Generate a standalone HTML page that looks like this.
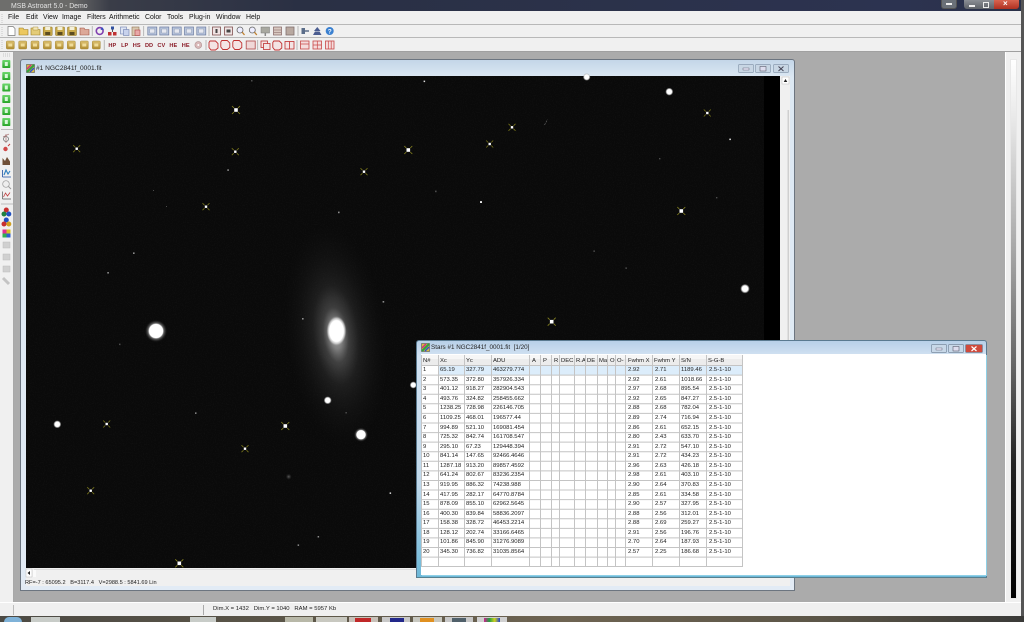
<!DOCTYPE html>
<html><head><meta charset="utf-8"><title>MSB Astroart 5.0 - Demo</title>
<style>
html,body{margin:0;padding:0;background:#ababab;width:1024px;height:622px;overflow:hidden}
body{position:relative;font-family:"Liberation Sans",sans-serif;color:#333;filter:blur(.3px)}
svg{position:absolute;left:0;top:0}
.a{position:absolute}
#menu span{position:absolute;top:14px;font-size:6.9px;line-height:8px;color:#111;white-space:nowrap}
.r{position:absolute;left:0;height:9.58px;width:340px;font-size:5.9px;line-height:9.58px;color:#222;margin-top:.6px}
.r b{position:absolute;font-weight:normal;white-space:nowrap}
.r b:nth-child(1){left:423px}.r b:nth-child(2){left:440px}.r b:nth-child(3){left:466px}.r b:nth-child(4){left:493px}
.r b:nth-child(5){left:628px}.r b:nth-child(6){left:655px}.r b:nth-child(7){left:681px}.r b:nth-child(8){left:709px}
.h{position:absolute;top:357px;font-size:5.9px;line-height:9px;color:#222;white-space:nowrap}
</style></head><body>

<!-- application chrome base -->
<div class="a" style="left:0;top:0;width:1024px;height:11px;background:linear-gradient(90deg,#6e6e6c 0,#6a6a68 70px,#3a3d48 110px,#2a3044 300px,#2c3350 900px,#2a3148 1024px)"></div>
<div class="a" style="left:11px;top:1.500px;font-size:6.9px;line-height:9px;color:#e2e2e2;white-space:nowrap">MSB Astroart 5.0 - Demo</div>
<div class="a" style="left:0;top:11px;width:1021px;height:41px;background:#f0f0f0"></div>
<div class="a" style="left:0;top:24px;width:1021px;height:1px;background:#b8b8b8"></div>
<div class="a" style="left:0;top:37px;width:1021px;height:1px;background:#b8b8b8"></div>
<div class="a" style="left:0;top:51px;width:1021px;height:1px;background:#a0a0a0"></div>
<div class="a" style="left:0;top:52px;width:14px;height:551px;background:#f0f0f0;border-right:1px solid #a8a8a8;box-sizing:border-box"></div>
<div class="a" style="left:1005px;top:52px;width:16px;height:551px;background:#f0f0f0;border-left:1px solid #fff;box-sizing:border-box"></div>
<div class="a" style="left:1011px;top:60px;width:5px;height:538px;background:linear-gradient(180deg,#fff 0,#e6e6e6 12%,#a8a8a8 35%,#6a6a6a 55%,#222 75%,#000 100%);box-shadow:0 0 0 1px #e8e8e8"></div>
<div class="a" style="left:1021px;top:0;width:3px;height:622px;background:#555"></div>
<div class="a" style="left:0;top:602px;width:1021px;height:14px;background:#f0f0f0;border-top:1px solid #fff;box-sizing:border-box"></div>
<div class="a" style="left:13px;top:605px;width:1px;height:10px;background:#bbb"></div>
<div class="a" style="left:203px;top:605px;width:1px;height:10px;background:#aaa"></div>
<div class="a" style="left:213px;top:605px;font-size:5.9px;line-height:8px;color:#222;white-space:pre">Dim.X = 1432   Dim.Y = 1040   RAM = 5957 Kb</div>

<!-- taskbar -->
<div class="a" style="left:0;top:616px;width:1024px;height:6px;background:linear-gradient(90deg,#4c4a44,#5c5648 30%,#6e6452 55%,#5c5648 80%,#3a3a38)"></div>
<div class="a" style="left:4px;top:617px;width:18px;height:5px;border-radius:9px 9px 0 0;background:#7fb2d8"></div>
<div class="a" style="left:31px;top:617px;width:29px;height:5px;background:#c8ccc8"></div>
<div class="a" style="left:190px;top:617px;width:26px;height:5px;background:#c8ccc8"></div>
<div class="a" style="left:285px;top:617px;width:28px;height:5px;background:#b8b8a8"></div>
<div class="a" style="left:316px;top:617px;width:31px;height:5px;background:#c8c8c0"></div>
<div class="a" style="left:349px;top:617px;width:29px;height:5px;background:#c8c0b8"></div>
<div class="a" style="left:355px;top:618px;width:16px;height:4px;background:#c02828"></div>
<div class="a" style="left:382px;top:617px;width:28px;height:5px;background:#c8c8c8"></div>
<div class="a" style="left:390px;top:618px;width:14px;height:4px;background:#22288a"></div>
<div class="a" style="left:413px;top:617px;width:29px;height:5px;background:#c8c8c0"></div>
<div class="a" style="left:420px;top:618px;width:14px;height:4px;background:#e09020"></div>
<div class="a" style="left:445px;top:617px;width:28px;height:5px;background:#c8c8c8"></div>
<div class="a" style="left:452px;top:618px;width:14px;height:4px;background:#50606a"></div>
<div class="a" style="left:477px;top:617px;width:30px;height:5px;background:#d0d0d0"></div>
<div class="a" style="left:484px;top:618px;width:16px;height:4px;background:linear-gradient(90deg,#d02090,#20a040,#d0d020,#2040d0)"></div>

<!-- menu -->
<div id="menu">
<span style="left:8px">File</span><span style="left:26px">Edit</span><span style="left:43px">View</span><span style="left:62px">Image</span><span style="left:87px">Filters</span><span style="left:109px">Arithmetic</span><span style="left:145px">Color</span><span style="left:167px">Tools</span><span style="left:189px">Plug-in</span><span style="left:216px">Window</span><span style="left:246px">Help</span>
</div>

<!-- window 1 frame -->
<div class="a" style="left:20px;top:59px;width:775px;height:532px;box-sizing:border-box;border:1px solid #6c7580;border-radius:3px 3px 0 0;background:linear-gradient(180deg,#c4d6e8 0,#dce8f3 17px,#e2ebf5 100%)"></div>
<div class="a" style="left:36px;top:64.500px;font-size:6.6px;line-height:8px;color:#222;white-space:nowrap">#1 NGC2841f_0001.fit</div>
<div class="a" style="left:26px;top:568px;width:764px;height:18px;background:#f0f0f0"></div>
<div class="a" style="left:25px;top:579px;font-size:5.6px;line-height:8px;color:#222;white-space:pre">RF=-7 : 65095.2   B=3117.4   V=2988.5 : 5841.69 Lin</div>
<div class="a" style="left:780px;top:76px;width:10px;height:492px;background:#f0f0f0"></div>

<!-- main svg: image, icons -->
<svg width="1024" height="622" viewBox="0 0 1024 622" xmlns="http://www.w3.org/2000/svg">
<defs>
<radialGradient id="g"><stop offset="0" stop-color="#fff"/><stop offset=".6" stop-color="#fff"/><stop offset=".8" stop-color="#bbb" stop-opacity=".7"/><stop offset="1" stop-color="#888" stop-opacity="0"/></radialGradient>
<radialGradient id="gb"><stop offset="0" stop-color="#fff"/><stop offset=".62" stop-color="#fff"/><stop offset=".72" stop-color="#999" stop-opacity=".6"/><stop offset="1" stop-color="#444" stop-opacity="0"/></radialGradient>
<radialGradient id="d"><stop offset="0" stop-color="#aaa"/><stop offset="1" stop-color="#555" stop-opacity="0"/></radialGradient>
<radialGradient id="halo"><stop offset="0" stop-color="#fff"/><stop offset=".12" stop-color="#c8c8c8" stop-opacity=".9"/><stop offset=".25" stop-color="#777" stop-opacity=".6"/><stop offset=".45" stop-color="#444" stop-opacity=".4"/><stop offset=".7" stop-color="#2a2a2a" stop-opacity=".25"/><stop offset="1" stop-color="#1a1a1a" stop-opacity="0"/></radialGradient>
<radialGradient id="core"><stop offset="0" stop-color="#fff"/><stop offset=".7" stop-color="#fff"/><stop offset=".85" stop-color="#ddd" stop-opacity=".7"/><stop offset="1" stop-color="#999" stop-opacity="0"/></radialGradient>
<filter id="n" x="0" y="0" width="100%" height="100%"><feTurbulence type="fractalNoise" baseFrequency=".9" numOctaves="2" seed="4"/><feColorMatrix values="0 0 0 0 .35 0 0 0 0 .35 0 0 0 0 .35 .9 0 0 0 -.42"/></filter>
<g id="x"><path d="M-3.5-3.5-1.5-1.5M3.5-3.5 1.5-1.5M-3.5 3.5-1.5 1.5M3.5 3.5 1.5 1.5" stroke="#77741a" stroke-width=".8" fill="none"/><rect x="-1.2" y="-1.2" width="2.4" height="2.4" fill="#fff"/></g>
<g id="X"><path d="M-4-4-2-2M4-4 2-2M-4 4-2 2M4 4 2 2" stroke="#8a8620" stroke-width=".8" fill="none"/><rect x="-1.8" y="-1.8" width="3.6" height="3.6" fill="#fff"/></g>
<linearGradient id="gold" x1="0" y1="0" x2="0" y2="1"><stop offset="0" stop-color="#dcc070"/><stop offset="1" stop-color="#b08c30"/></linearGradient>
<linearGradient id="grn" x1="0" y1="0" x2="0" y2="1"><stop offset="0" stop-color="#6cd86c"/><stop offset="1" stop-color="#28a428"/></linearGradient>
<g id="gs"><rect x="-4" y="-4" width="8" height="8" rx="1" fill="url(#gold)" stroke="#a88a38" stroke-width=".5"/><rect x="-2" y="-1.5" width="4" height="3" fill="#f0dc98"/></g>
<g id="gr"><rect x="-4" y="-4" width="8" height="8" rx=".8" fill="url(#grn)"/><rect x="-1.5" y="-2" width="3" height="4" fill="#d8f8d8"/></g>
<g id="bf"><rect x="-4.5" y="-4" width="9" height="8" fill="#b8c4dc" stroke="#6c7ca0" stroke-width=".7"/><rect x="-2.5" y="-2" width="5" height="4" fill="#e6e8f0" stroke="#8090a8" stroke-width=".4"/></g>
<g id="rf"><rect x="-4.5" y="-4" width="9" height="8" fill="#f0d8d8" stroke="#b04848" stroke-width=".8"/></g>
<g id="rd"><path d="M-3.5-4.5H2L4.5-2V2.5L2 4.5H-2.5L-4.5 2V-3Z" fill="#f4e4e4" stroke="#c03030" stroke-width=".9"/></g>
<g id="fl"><rect x="-4.5" y="-4" width="9" height="8.5" rx=".6" fill="#c8a848" stroke="#8a7020" stroke-width=".5"/><rect x="-2.5" y="-4" width="5" height="3" fill="#f4f0d8"/><rect x="-2.5" y="1" width="5" height="3" fill="#5c4c20"/></g>
</defs>

<!-- image -->
<rect x="26" y="76" width="754" height="492" fill="#000"/>
<rect x="26" y="76" width="738" height="492" fill="#0a0a0a"/>
<rect x="26" y="76" width="738" height="492" filter="url(#n)" opacity=".14"/>
<g transform="rotate(-7 336 335)">
<ellipse cx="336" cy="335" rx="50" ry="112" fill="url(#halo)" opacity=".85"/>
<ellipse cx="336" cy="331" rx="20" ry="34" fill="url(#halo)" opacity=".8"/>
</g>
<ellipse cx="336.5" cy="331" rx="10" ry="15" fill="url(#core)"/>
<!-- bright -->
<circle cx="156" cy="331" r="11" fill="url(#gb)"/>
<circle cx="361" cy="434.7" r="7" fill="url(#gb)"/>
<circle cx="745" cy="288.7" r="4.8" fill="url(#g)"/>
<circle cx="669.3" cy="91.7" r="4" fill="url(#g)"/>
<circle cx="586.7" cy="77" r="3.8" fill="url(#g)"/>
<circle cx="57.3" cy="424.3" r="4" fill="url(#g)"/>
<circle cx="327.7" cy="400.3" r="4" fill="url(#g)"/>
<circle cx="413.3" cy="385" r="3.6" fill="url(#g)"/>
<!-- crosses -->
<use href="#x" x="76.7" y="148.7"/><use href="#X" x="236" y="110"/><use href="#x" x="235.3" y="151.7"/><use href="#x" x="206" y="206.7"/>
<use href="#x" x="364" y="171.7"/><use href="#X" x="408.3" y="150"/><use href="#x" x="707.3" y="113"/><use href="#x" x="512" y="127.3"/>
<use href="#x" x="489.7" y="144"/><use href="#X" x="681.3" y="211"/><use href="#X" x="551.7" y="321.7"/><use href="#x" x="106.7" y="424"/>
<use href="#X" x="285.3" y="426"/><use href="#x" x="245" y="448.7"/><use href="#x" x="90.7" y="490.7"/><use href="#X" x="179.3" y="563.3"/>
<!-- small -->
<g fill="#ddd">
<rect x="423.6" y="80.6" width="1.5" height="1.5"/><rect x="729.3" y="138.6" width="1.6" height="1.5"/><rect x="480" y="201.2" width="2" height="1.7" fill="#fff"/><rect x="389.6" y="492.4" width="1.5" height="1.5"/>
</g>
<g fill="#8c8c8c">
<rect x="338" y="211.6" width="1.6" height="1.6"/><rect x="227.3" y="169.3" width="1.6" height="1.6"/><rect x="133" y="252.4" width="1.6" height="1.6"/><rect x="107.3" y="272" width="1.6" height="1.6"/><rect x="382.6" y="301" width="1.6" height="1.6"/><rect x="302" y="318" width="1.6" height="1.6"/><rect x="195" y="412.4" width="1.5" height="1.5"/><rect x="297.6" y="544.4" width="1.5" height="1.5"/><rect x="317.6" y="536" width="1.5" height="1.5"/>
</g>
<g fill="#4c4c4c">
<rect x="251" y="80" width="1.5" height="1.5"/><rect x="435" y="190.6" width="1.6" height="1.6"/><rect x="625.4" y="267.4" width="1.5" height="1.5"/><rect x="593.4" y="250.4" width="1.5" height="1.5"/><rect x="119" y="343.6" width="1.5" height="1.5"/><rect x="345.4" y="412" width="1.5" height="1.5"/><rect x="166" y="206" width="1" height="1"/><rect x="153" y="190" width="1" height="1"/><rect x="659" y="158" width="1.4" height="1.4"/><rect x="716" y="197" width="1.4" height="1.4"/>
</g>
<circle cx="288.7" cy="476.7" r="3" fill="url(#d)" opacity=".5"/>
<path d="M544.5 125 547.5 119.5" stroke="#666" stroke-width=".7" stroke-dasharray="2 1"/>

<!-- v scrollbar -->
<rect x="782" y="77" width="7" height="7" fill="#fff" stroke="#bbb" stroke-width=".5"/><path d="M785.5 79 783.7 82H787.3Z" fill="#222"/>
<rect x="787.5" y="110" width="1.5" height="458" fill="#cfcfcf"/>
<!-- h scrollbar -->
<rect x="26" y="569" width="6" height="8" fill="#fff" stroke="#bbb" stroke-width=".5"/><path d="M27.5 573 30 571V575Z" fill="#222"/>
<rect x="34" y="569" width="720" height="1" fill="#ddd"/><rect x="33" y="570" width="3" height="7" fill="#fafafa"/>

<!-- window 1 caption -->
<g><rect x="26.5" y="64.5" width="8" height="8" fill="#d8b840" stroke="#555" stroke-width=".6"/><path d="M27 72 34 65" stroke="#30a040" stroke-width="2"/><path d="M27 69 31 65" stroke="#d03080" stroke-width="1.5"/><path d="M30 72 34 68" stroke="#3050d0" stroke-width="1.5"/></g>
<g fill="#c8d6e4" stroke="#8a9cb0" stroke-width=".7">
<rect x="738.5" y="64.5" width="15" height="8" rx="1"/><rect x="755.5" y="64.5" width="15" height="8" rx="1"/><rect x="773.5" y="64.5" width="15" height="8" rx="1"/></g>
<rect x="743" y="68" width="6" height="2" fill="#eef" stroke="#445" stroke-width=".4"/>
<rect x="760" y="66.5" width="6" height="4.5" fill="#dde" stroke="#445" stroke-width=".5"/>
<path d="M778.5 66.5 783.5 71M783.5 66.5 778.5 71" stroke="#445" stroke-width="1"/>

<!-- toolbar grips -->
<g stroke="#c8c8c8" stroke-dasharray="1 1"><path d="M2 14V23M2 27V36M2 40V50M3 54H11M3 56H11"/></g>

<!-- row 1 -->
<path d="M8 26.5H13L15 28.5V35.5H8Z" fill="#fff" stroke="#777" stroke-width=".7"/>
<path d="M19 28H23L24 29.5H28V35H19Z" fill="#ecc860" stroke="#9a7c24" stroke-width=".6"/>
<path d="M31 28H35L36 29.5H40V35H31Z" fill="#e4cc78" stroke="#9a7c24" stroke-width=".6"/><path d="M33 27H38V30H33Z" fill="#f4e8b8" stroke="#9a7c24" stroke-width=".4"/>
<use href="#fl" x="47.7" y="31"/><use href="#fl" x="60" y="31"/><use href="#fl" x="72" y="31"/>
<path d="M80 28H84L85 29.5H89V35H80Z" fill="#dca898" stroke="#a05040" stroke-width=".6"/>
<path d="M92.3 26V36M143.6 26V36M209 26V36M298 26V36" stroke="#b8b8b8"/>
<circle cx="99.7" cy="31" r="3.4" fill="none" stroke="#8040b0" stroke-width="1.6"/><path d="M102 27 104 29.500 100.500 30Z" fill="#3050c0"/>
<rect x="111" y="26.500" width="3" height="3" fill="#3050a0"/><rect x="108" y="32" width="3.500" height="3.500" fill="#c03030"/><rect x="113" y="32" width="3.500" height="3.500" fill="#c03030"/><path d="M112.500 29.500V32" stroke="#555"/>
<rect x="120.500" y="27" width="6" height="7" fill="#dde4f4" stroke="#7080b0" stroke-width=".6"/><rect x="123.500" y="29.500" width="5.500" height="6" fill="#c8d2ec" stroke="#7080b0" stroke-width=".6"/>
<rect x="132" y="27" width="7" height="8.500" fill="#d8c8b0" stroke="#907050" stroke-width=".6"/><rect x="135" y="30" width="5" height="5.500" fill="#e8a8a8" stroke="#b04848" stroke-width=".6"/>
<use href="#bf" x="152.300" y="31"/><use href="#bf" x="164.300" y="31"/><use href="#bf" x="176.700" y="31"/><use href="#bf" x="189" y="31"/><use href="#bf" x="201.300" y="31"/>
<rect x="212.500" y="27" width="8" height="8" fill="#f0e4e4" stroke="#805050" stroke-width=".8"/><rect x="215.500" y="29" width="2" height="4" fill="#444"/>
<rect x="224.500" y="27" width="8" height="8" fill="#f0e4e4" stroke="#805050" stroke-width=".8"/><rect x="226.500" y="29.500" width="4" height="3" fill="#444"/>
<circle cx="240" cy="30" r="3" fill="#eef" stroke="#666" stroke-width=".8"/><path d="M242.200 32.200 244.500 35" stroke="#c08030" stroke-width="1.300"/>
<circle cx="252.300" cy="30" r="3" fill="#eef" stroke="#666" stroke-width=".8"/><path d="M254.500 32.200 256.800 35" stroke="#c08030" stroke-width="1.300"/>
<rect x="261" y="27" width="8.500" height="6" fill="#a8a8a0" stroke="#777" stroke-width=".5"/><path d="M265.300 33V36" stroke="#888" stroke-width="1.500"/>
<rect x="273.500" y="27" width="8" height="8" fill="#d8c8c0" stroke="#806060" stroke-width=".7"/><path d="M274 30H281M274 32.500H281" stroke="#806060" stroke-width=".5"/>
<rect x="286" y="27" width="8" height="8" fill="#b8a8a0" stroke="#807070" stroke-width=".8"/>
<rect x="301.500" y="28" width="3.500" height="6" fill="#5a6c88"/><path d="M305 31H309" stroke="#5a6c88" stroke-width="1.500"/>
<path d="M317.300 27 320.500 31H314ZM313 35 315 31.500H319.500L321.500 35Z" fill="#4a5c90"/>
<circle cx="329.700" cy="31" r="4" fill="#3a80d0"/><text x="329.700" y="33.500" font-size="6.500" font-family="Liberation Sans" font-weight="bold" text-anchor="middle" fill="#fff">?</text>

<!-- row 2 -->
<use href="#gs" x="10.300" y="45"/><use href="#gs" x="22.700" y="45"/><use href="#gs" x="35" y="45"/><use href="#gs" x="47.300" y="45"/><use href="#gs" x="59.300" y="45"/><use href="#gs" x="71.300" y="45"/><use href="#gs" x="84.300" y="45"/><use href="#gs" x="96.300" y="45"/>
<path d="M104.300 40V50M206 40V50M257.600 40V50M297 40V50" stroke="#b8b8b8"/>
<g font-family="Liberation Sans" font-size="5.600" font-weight="bold" fill="#8a1c28" text-anchor="middle">
<text x="112.300" y="47">HP</text><text x="124.700" y="47">LP</text><text x="136.700" y="47">HS</text><text x="149" y="47">DD</text><text x="161.300" y="47">CV</text><text x="173.300" y="47">HE</text><text x="185.700" y="47">HE</text>
</g>
<circle cx="198.300" cy="45" r="3.400" fill="#d8b8b8" stroke="#b09090" stroke-width=".6"/><circle cx="198.300" cy="45" r="1" fill="#fff"/>
<use href="#rd" x="213.500" y="45.500"/><use href="#rd" x="225.300" y="45"/><use href="#rd" x="237.300" y="45"/><use href="#rf" x="250.700" y="45"/>
<rect x="261" y="41" width="6.500" height="6.500" fill="#f4e4e4" stroke="#c03030" stroke-width=".8"/><rect x="263.500" y="43.500" width="6.500" height="6" fill="#f4e4e4" stroke="#c03030" stroke-width=".8"/>
<use href="#rd" x="277.300" y="45.500"/><rect x="285" y="41.500" width="9" height="7.500" fill="#f4e4e4" stroke="#c03030" stroke-width=".8"/><path d="M289.500 41.500V49" stroke="#c03030" stroke-width=".8"/>
<g fill="#f4dcdc" stroke="#c84848" stroke-width=".8"><rect x="300.500" y="41" width="8.500" height="8"/><rect x="313" y="41" width="8.500" height="8"/><rect x="325.500" y="41" width="8.500" height="8"/></g>
<path d="M300.500 44H309M313 45H321.500M317.300 41V49M328.300 41V49M331.200 41V49" stroke="#c84848" stroke-width=".7"/>

<!-- left bar -->
<use href="#gr" x="6.300" y="64"/><use href="#gr" x="6.300" y="76"/><use href="#gr" x="6.300" y="87.500"/><use href="#gr" x="6.300" y="99"/><use href="#gr" x="6.300" y="111"/><use href="#gr" x="6.300" y="122"/>
<path d="M1 129.500H13M1 204H13" stroke="#bcbcbc"/>
<circle cx="6" cy="139" r="2.500" fill="none" stroke="#777" stroke-width=".8"/><path d="M6 134V143M3 137 9 134" stroke="#a06060" stroke-width=".6"/>
<circle cx="5.500" cy="149" r="2.200" fill="#d04848"/><path d="M8 146 10 144" stroke="#c04040"/>
<path d="M2.500 165V158L5 161 7 157 10 161.500V165Z" fill="#705038"/>
<path d="M2.500 177V170M2.500 177H11" stroke="#2050a0" stroke-width=".8"/><path d="M4 175 6 170 8 174 10 171" stroke="#3080c0" fill="none" stroke-width="1.100"/>
<circle cx="6" cy="184" r="3.300" fill="#eee" stroke="#999" stroke-width=".7"/><path d="M8.500 186.500 11 189" stroke="#999"/>
<path d="M2.500 199V191.500M2.500 199H11" stroke="#555" stroke-width=".7"/><path d="M3.500 197 5.500 193 7.500 196 10 192.500" stroke="#c04040" fill="none" stroke-width=".8"/>
<circle cx="6.300" cy="210" r="2.500" fill="#c83030"/><circle cx="4" cy="214" r="2.500" fill="#208040"/><circle cx="8.800" cy="214" r="2.500" fill="#2050c0"/>
<circle cx="6.300" cy="220" r="2.500" fill="#2050c0"/><circle cx="4" cy="224" r="2.500" fill="#c83030"/><circle cx="8.800" cy="224" r="2.500" fill="#d0a020"/>
<rect x="2.500" y="229.500" width="4" height="4" fill="#e03090"/><rect x="6.500" y="229.500" width="4" height="4" fill="#d8c020"/><rect x="2.500" y="233.500" width="4" height="4" fill="#30b050"/><rect x="6.500" y="233.500" width="4" height="4" fill="#3060d0"/>
<g fill="#d0d0d0" stroke="#bcbcbc" stroke-width=".5"><rect x="3" y="242" width="7" height="6"/><rect x="3" y="254" width="7" height="6"/><rect x="3" y="266" width="7" height="6"/></g>
<path d="M3 278 9 284" stroke="#c4c4c4" stroke-width="3"/>
</svg>

<!-- stars window -->
<div class="a" style="left:416px;top:340px;width:571px;height:238px;box-sizing:border-box;border:1px solid #5a7a90;border-bottom-color:#56808f;border-radius:3px 3px 0 0;background:linear-gradient(180deg,#b8d0e8 0,#d2e2f2 15px,#c0d8ea 60%,#6db8d8 100%)"></div>
<div class="a" style="left:421px;top:354px;width:565px;height:221px;background:#fff;box-shadow:1px 1px 0 #8fd0e6"></div>
<div class="a" style="left:431px;top:344px;font-size:6.300px;line-height:8px;color:#222;white-space:pre">Stars #1 NGC2841f_0001.fit  [1/20]</div>

<svg width="1024" height="622" viewBox="0 0 1024 622" xmlns="http://www.w3.org/2000/svg" style="pointer-events:none">
<rect x="421.500" y="343.500" width="8" height="8" fill="#d8b840" stroke="#555" stroke-width=".6"/><path d="M422 351 429 344" stroke="#30a040" stroke-width="2"/><path d="M422 348 426 344" stroke="#d03080" stroke-width="1.500"/><path d="M425 351 429 347" stroke="#3050d0" stroke-width="1.500"/>
<g stroke="#7a8ca0" stroke-width=".7"><rect x="931.500" y="344.500" width="15" height="8" rx="1" fill="#c8d8e8"/><rect x="948.500" y="344.500" width="15" height="8" rx="1" fill="#c8d8e8"/><rect x="965.500" y="344.500" width="17" height="8" rx="1" fill="#d04a3c"/></g>
<rect x="936" y="348" width="6" height="2" fill="#eef" stroke="#445" stroke-width=".4"/>
<rect x="953" y="346.500" width="6" height="4.500" fill="#dde" stroke="#445" stroke-width=".5"/>
<path d="M971.500 346.500 976.500 351M976.500 346.500 971.500 351" stroke="#fff" stroke-width="1.200"/>
<!-- header -->
<rect x="421" y="355" width="321" height="10.500" fill="#ececec"/>
<rect x="421" y="355" width="321" height="4" fill="#f6f6f6"/>
<!-- highlight -->
<rect x="438" y="366" width="304" height="9" fill="#dcedfb"/>
<!-- grid -->
<g stroke="#c4c4c4" stroke-width="1" fill="none">
<path d="M421 365.500H742M421 375.100H742M421 384.700H742M421 394.200H742M421 403.800H742M421 413.400H742M421 423H742M421 432.600H742M421 442.100H742M421 451.700H742M421 461.300H742M421 470.900H742M421 480.500H742M421 490H742M421 499.600H742M421 509.200H742M421 518.800H742M421 528.400H742M421 537.900H742M421 547.500H742M421 557.100H742M421 566.500H742"/>
<path d="M421.500 355V567M438.500 355V567M464.500 355V567M491.500 355V567M529.500 355V567M540.500 355V567M551.500 355V567M559.500 355V567M574.500 355V567M585.500 355V567M597.500 355V567M607.500 355V567M615.500 355V567M625.500 355V567M652.500 355V567M679.500 355V567M706.500 355V567M742.500 355V567"/>
</g>
</svg>

<span class="h" style="left:423px">N#</span><span class="h" style="left:440px">Xc</span><span class="h" style="left:466px">Yc</span><span class="h" style="left:493px">ADU</span><span class="h" style="left:532px">A</span><span class="h" style="left:543px">P</span><span class="h" style="left:554px">R</span><span class="h" style="left:561px">DEC</span><span class="h" style="left:576px;width:9px;overflow:hidden">R.A</span><span class="h" style="left:587px;width:10px;overflow:hidden">DE</span><span class="h" style="left:599px;width:8px;overflow:hidden">Ma</span><span class="h" style="left:610px">O</span><span class="h" style="left:617px;width:8px;overflow:hidden">O-</span><span class="h" style="left:628px">Fwhm X</span><span class="h" style="left:654px">Fwhm Y</span><span class="h" style="left:681px">S/N</span><span class="h" style="left:708px">S-G-B</span>

<div class="r" style="top:365.500px"><b>1</b><b>65.19</b><b>327.79</b><b>463279.774</b><b>2.92</b><b>2.71</b><b>1189.46</b><b>2.5-1-10</b></div>
<div class="r" style="top:375.100px"><b>2</b><b>573.35</b><b>372.80</b><b>357926.334</b><b>2.92</b><b>2.61</b><b>1018.66</b><b>2.5-1-10</b></div>
<div class="r" style="top:384.700px"><b>3</b><b>401.12</b><b>918.27</b><b>282904.543</b><b>2.97</b><b>2.68</b><b>895.54</b><b>2.5-1-10</b></div>
<div class="r" style="top:394.200px"><b>4</b><b>493.76</b><b>324.82</b><b>258455.662</b><b>2.92</b><b>2.65</b><b>847.27</b><b>2.5-1-10</b></div>
<div class="r" style="top:403.800px"><b>5</b><b>1238.25</b><b>728.98</b><b>226146.705</b><b>2.88</b><b>2.68</b><b>782.04</b><b>2.5-1-10</b></div>
<div class="r" style="top:413.400px"><b>6</b><b>1109.25</b><b>468.01</b><b>196577.44</b><b>2.89</b><b>2.74</b><b>716.94</b><b>2.5-1-10</b></div>
<div class="r" style="top:423px"><b>7</b><b>994.89</b><b>521.10</b><b>169081.454</b><b>2.86</b><b>2.61</b><b>652.15</b><b>2.5-1-10</b></div>
<div class="r" style="top:432.600px"><b>8</b><b>725.32</b><b>842.74</b><b>161708.547</b><b>2.80</b><b>2.43</b><b>633.70</b><b>2.5-1-10</b></div>
<div class="r" style="top:442.100px"><b>9</b><b>295.10</b><b>67.23</b><b>129448.394</b><b>2.91</b><b>2.72</b><b>547.10</b><b>2.5-1-10</b></div>
<div class="r" style="top:451.700px"><b>10</b><b>841.14</b><b>147.65</b><b>92466.4646</b><b>2.91</b><b>2.72</b><b>434.23</b><b>2.5-1-10</b></div>
<div class="r" style="top:461.300px"><b>11</b><b>1287.18</b><b>913.20</b><b>89857.4592</b><b>2.96</b><b>2.63</b><b>426.18</b><b>2.5-1-10</b></div>
<div class="r" style="top:470.900px"><b>12</b><b>641.24</b><b>802.67</b><b>83236.2354</b><b>2.98</b><b>2.61</b><b>403.10</b><b>2.5-1-10</b></div>
<div class="r" style="top:480.500px"><b>13</b><b>919.95</b><b>886.32</b><b>74238.988</b><b>2.90</b><b>2.64</b><b>370.83</b><b>2.5-1-10</b></div>
<div class="r" style="top:490px"><b>14</b><b>417.95</b><b>282.17</b><b>64770.8784</b><b>2.85</b><b>2.61</b><b>334.58</b><b>2.5-1-10</b></div>
<div class="r" style="top:499.600px"><b>15</b><b>878.09</b><b>855.10</b><b>62962.5645</b><b>2.90</b><b>2.57</b><b>327.95</b><b>2.5-1-10</b></div>
<div class="r" style="top:509.200px"><b>16</b><b>400.30</b><b>839.84</b><b>58836.2097</b><b>2.88</b><b>2.56</b><b>312.01</b><b>2.5-1-10</b></div>
<div class="r" style="top:518.800px"><b>17</b><b>158.38</b><b>328.72</b><b>46453.2214</b><b>2.88</b><b>2.69</b><b>259.27</b><b>2.5-1-10</b></div>
<div class="r" style="top:528.400px"><b>18</b><b>128.12</b><b>202.74</b><b>33166.6465</b><b>2.91</b><b>2.56</b><b>196.76</b><b>2.5-1-10</b></div>
<div class="r" style="top:537.900px"><b>19</b><b>101.86</b><b>845.90</b><b>31276.9089</b><b>2.70</b><b>2.64</b><b>187.93</b><b>2.5-1-10</b></div>
<div class="r" style="top:547.500px"><b>20</b><b>345.30</b><b>736.82</b><b>31035.8564</b><b>2.57</b><b>2.25</b><b>186.68</b><b>2.5-1-10</b></div>

<!-- title bar controls -->
<div class="a" style="left:941px;top:0;width:16px;height:9px;background:#6a7078;border-radius:0 0 3px 3px;border:1px solid #555;border-top:0;box-sizing:border-box"></div>
<div class="a" style="left:946px;top:3px;width:6px;height:2px;background:#eee"></div>
<div class="a" style="left:964px;top:0;width:30px;height:9px;background:linear-gradient(180deg,#8a8e94,#5e6268);border-radius:0 0 0 3px"></div>
<div class="a" style="left:994px;top:0;width:25px;height:9px;background:linear-gradient(180deg,#d86450,#b03020);border-radius:0 0 3px 0"></div>
<div class="a" style="left:969px;top:5px;width:6px;height:2px;background:#eee"></div>
<div class="a" style="left:983px;top:2px;width:4px;height:4px;border:1px solid #eee"></div>
<div class="a" style="left:1003px;top:0;font-size:8px;line-height:8px;color:#fff;font-weight:bold">×</div>
</body></html>
